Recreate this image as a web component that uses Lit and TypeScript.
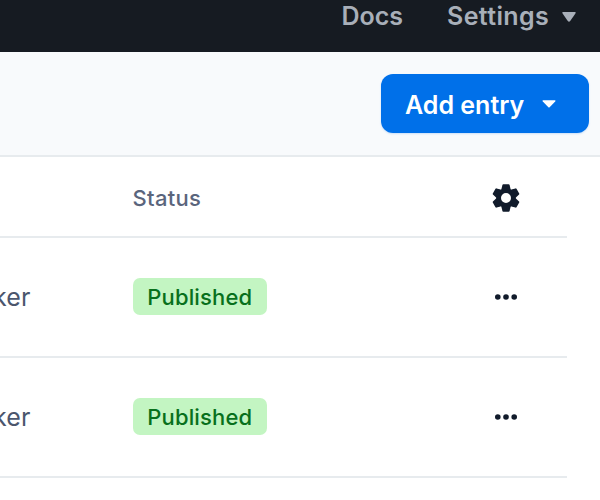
import { LitElement, html, css, svg } from "lit";
import { customElement } from "lit/decorators.js";

const caret = (cls: string, d: string, box: string) =>
  html`<svg class=${cls} viewBox=${box} aria-hidden="true">${svg`<path d=${d} />`}</svg>`;

const teeth = [0, 60, 120, 180, 240, 300];

@customElement("app-root")
export class AppRoot extends LitElement {
  static styles = css`
    :host {
      display: block;
      width: 600px;
      height: 500px;
      overflow: hidden;
      background: #fff;
      font-family: Inter, "Liberation Sans", sans-serif;
    }
    * { box-sizing: border-box; }
    svg { display: block; flex: none; }
    .nav {
      height: 52px;
      display: flex;
      align-items: flex-start;
      justify-content: flex-end;
      background: #161b22;
      color: #a8afb9;
      font-size: 25px;
      font-weight: 600;
      line-height: 32px;
      padding-right: 24px;
    }
    .docs { margin-right: 44px; letter-spacing: 0; }
    .settings { display: flex; letter-spacing: 0.35px; }
    .nav-caret { width: 14px; height: 12px; margin: 11px 0 0 13px; fill: #a8afb9; }
    .toolbar {
      height: 105px;
      padding: 22px 11px 0 0;
      display: flex;
      justify-content: flex-end;
      background: #f8fafc;
      border-bottom: 2px solid #e7ebee;
    }
    .add {
      width: 208px;
      height: 59px;
      padding: 2px 0 0 24px;
      border: 0;
      border-radius: 12px;
      display: flex;
      align-items: center;
      background: #0070e9;
      color: #fff;
      font: 600 25px/36px Inter, "Liberation Sans", sans-serif;
      letter-spacing: 0;
      white-space: nowrap;
      box-shadow: 0 1px 2px #0070e930;
    }
    .add-caret { width: 14px; height: 8px; margin: -1px 0 0 17.5px; fill: #fff; }
    .table { width: 567px; }
    .row {
      height: 120px;
      display: grid;
      grid-template-columns: 132.5px 1fr 122px;
      align-items: center;
      border-bottom: 2px solid #e7ebee;
    }
    .head { height: 81px; }
    .status-label { font-size: 22px; font-weight: 500; line-height: 28px; letter-spacing: 0.3px; color: #5a657c; padding-top: 3px; }
    .name {
      display: flex;
      justify-content: flex-end;
      width: 30.5px;
      overflow: hidden;
      white-space: nowrap;
      font-size: 25px;
      line-height: 34px;
      letter-spacing: 0.1px;
      color: #4b566d;
    }
    .badge {
      display: flex;
      align-items: center;
      justify-content: center;
      width: 134.5px;
      height: 37px;
      margin-top: -1px;
      border-radius: 7px;
      background: #c3f5c2;
      color: #08701c;
      font-size: 22px;
      font-weight: 500;
      letter-spacing: 0.15px;
    }
    .gear { width: 28px; height: 28px; margin: 2px 0 0 47px; fill: #111b2b; }
    .gear .ring { fill: none; stroke: #111b2b; stroke-width: 5; }
    .dots { width: 24px; height: 8px; margin-left: 49px; fill: #111b2b; }
  `;

  private row() {
    return html`<div class="row">
      <span class="name">ker</span>
      <div><span class="badge">Published</span></div>
      <svg class="dots" viewBox="0 0 24 8" aria-label="Actions">
        <circle cx="3.8" cy="4" r="2.8" /><circle cx="12" cy="4" r="2.8" /><circle cx="20.2" cy="4" r="2.8" />
      </svg>
    </div>`;
  }

  render() {
    return html`
      <nav class="nav">
        <span class="docs">Docs</span>
        <span class="settings">Settings
          ${caret("nav-caret", "M1 1H13Q14.2 1.2 13.4 2.6L8.2 10Q7 11.4 5.8 10L0.6 2.6Q-0.2 1.2 1 1Z", "0 0 14 12")}
        </span>
      </nav>
      <div class="toolbar">
        <button class="add">Add entry ${caret("add-caret", "M1 0.3H13Q14 0.5 13.2 1.4L7.6 7.2Q7 7.7 6.4 7.2L0.8 1.4Q0 0.5 1 0.3Z", "0 0 14 8")}</button>
      </div>
      <div class="table">
        <div class="row head">
          <span></span>
          <span class="status-label">Status</span>
          <svg class="gear" viewBox="-14 -14 28 28" aria-label="Table settings">
            <circle class="ring" r="7.5" />
            ${teeth.map((a) => svg`<path transform="rotate(${a})" d="M-2.7-13.7H2.7Q3.4-13.7 3.6-13L4.6-8.8L2.5-7.4H-2.5L-4.6-8.8L-3.6-13Q-3.4-13.7-2.7-13.7Z" />`)}
          </svg>
        </div>
        ${this.row()}${this.row()}
      </div>
    `;
  }
}
